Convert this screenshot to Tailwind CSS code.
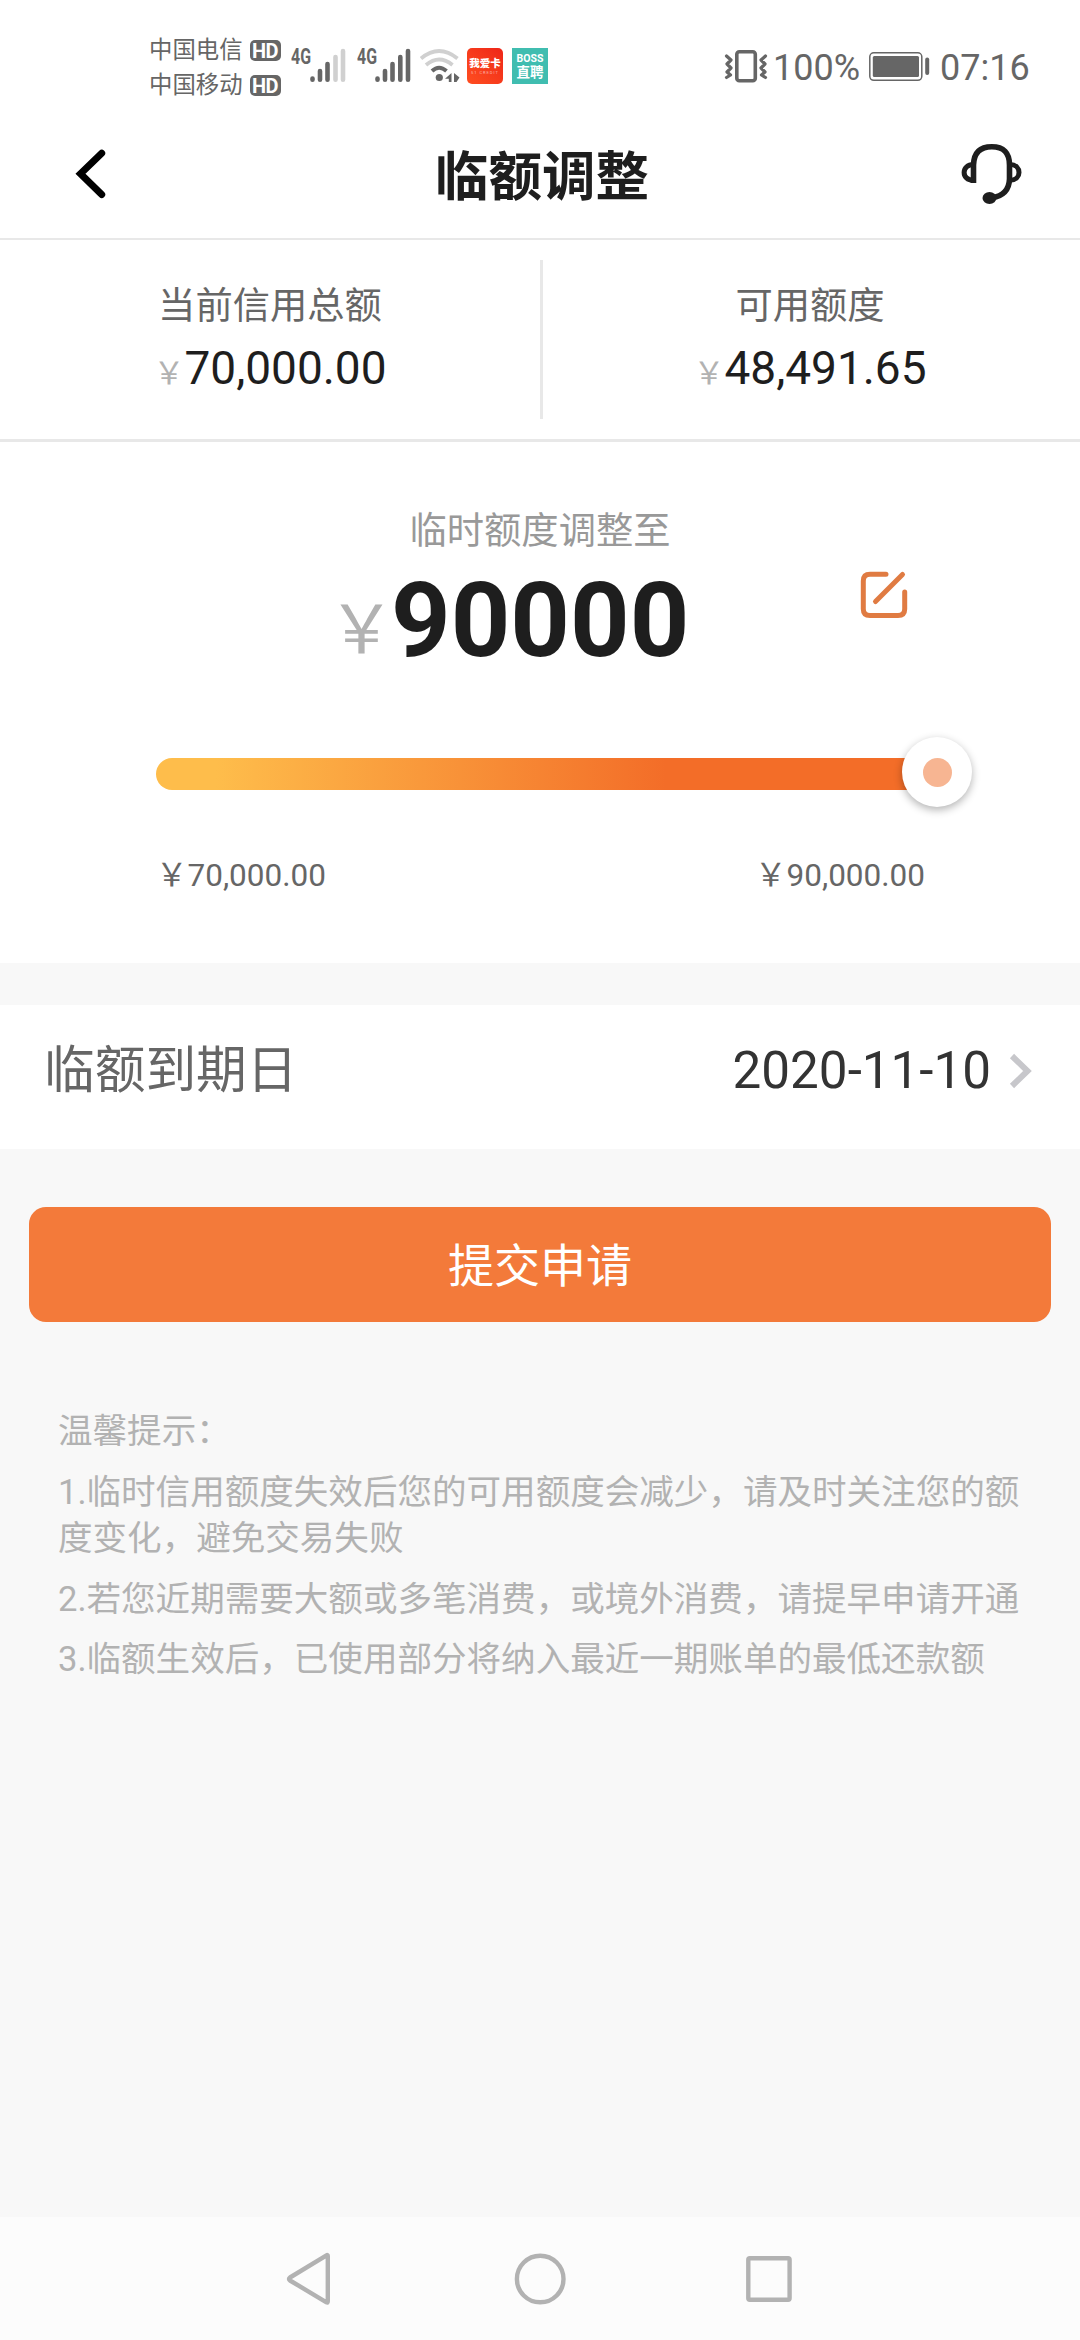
<!DOCTYPE html>
<html lang="zh-CN">
<head>
<meta charset="utf-8">
<title>临额调整</title>
<script src="https://cdn.jsdelivr.net/npm/@tailwindcss/browser@4"></script>
</head>
<body class="flex h-[2340px] w-[1080px] flex-col overflow-hidden bg-[#f8f8f8] font-['Roboto','Noto_Sans_CJK_SC',sans-serif] text-[#1e1e1e]">

<!-- Status bar -->
<div class="flex h-[105px] shrink-0 items-start bg-white text-[#666]">
  <div class="ml-[149px] mt-[33px] flex w-[134px] flex-col text-[23.4px] leading-[35px]">
    <div class="flex h-[35px] items-center gap-[7px]"><span class="whitespace-nowrap">中国电信</span><span class="flex h-[21px] w-[31px] items-center justify-center rounded-[5px] bg-[#666] text-[20px] font-bold leading-none tracking-[-0.5px] text-white">HD</span></div>
    <div class="flex h-[35px] items-center gap-[7px]"><span class="whitespace-nowrap">中国移动</span><span class="flex h-[21px] w-[31px] items-center justify-center rounded-[5px] bg-[#666] text-[20px] font-bold leading-none tracking-[-0.5px] text-white">HD</span></div>
  </div>
  <div class="ml-[8px] mt-[46px] w-[19px] origin-left scale-x-[0.74] whitespace-nowrap text-[21.5px] font-bold leading-[21px]">4G</div>
  <svg class="mt-[48px] h-[36px] w-[38px]" viewBox="310 48 38 36" fill="none" stroke="#666" stroke-width="4.6" stroke-linecap="round"><path d="M312.5 78.5v1.2M320 71v8.7M327.500 64v15.700"/><path stroke="#d0d0d0" d="M335.500 57v22.700M343 51v28.700"/></svg>
  <div class="ml-[9px] mt-[46px] w-[18px] origin-left scale-x-[0.74] whitespace-nowrap text-[21.5px] font-bold leading-[21px]">4G</div>
  <svg class="mt-[48px] h-[36px] w-[38px]" viewBox="375 48 38 36" fill="none" stroke="#666" stroke-width="4.600" stroke-linecap="round"><path d="M377.500 78.500v1.200M385 71v8.700M392.500 64v15.700M400.300 57v22.700M408 51v28.700"/></svg>
  <svg class="ml-[5px] mt-[48px] h-[36px] w-[44px]" viewBox="418 48 44 36" fill="none" stroke-linecap="butt"><path stroke="#d0d0d0" stroke-width="3.800" d="M421 58.500Q439 43.500 457.500 58.500M426 65Q439 54 452.500 65"/><path stroke="#666" stroke-width="4" d="M432 71Q439 64.500 446.500 71"/><circle cx="439.300" cy="77.500" r="3.600" fill="#666"/><path fill="#666" d="M451.500 73v9h-2.700v-3.200H445zM454 73l5.500 4.500L456.500 82H454z"/></svg>
  <div class="ml-[5px] mt-[48px] flex h-[36px] w-[36px] flex-col items-center justify-center rounded-[5px] bg-gradient-to-tr from-[#ff4d20] to-[#ee2418] text-white">
    <span class="whitespace-nowrap text-[10.500px] font-black leading-[12px]">我爱卡</span>
    <span class="h-[5px] origin-center scale-[0.5] whitespace-nowrap text-[8px] leading-[5px] tracking-[2px] text-white/60">51 CREDIT</span>
  </div>
  <div class="ml-[9px] mt-[48px] flex h-[36px] w-[36px] flex-col items-center justify-center bg-[#40bdb0] text-white">
    <span class="text-[10.500px] font-bold leading-[11px]">BOSS</span>
    <span class="whitespace-nowrap text-[13.500px] font-bold leading-[16px]">直聘</span>
  </div>
  <svg class="ml-[176px] mt-[48px] h-[36px] w-[44px]" viewBox="724 48 44 36" fill="none" stroke="#666"><rect x="736.800" y="51.800" width="18.500" height="29" rx="2.500" stroke-width="3.600"/><path stroke-width="3.200" stroke-linejoin="round" stroke-linecap="round" d="M726.500 56l4.500 4-4 4 4 4-4 4 3.500 3-4 2.500M765.500 56l-4.500 4 4 4-4 4 4 4-3.500 3 4 2.500"/></svg>
  <div class="ml-[5px] mt-[50px] w-[90px] text-[36px] leading-[36px]">100%</div>
  <svg class="ml-[5px] mt-[48px] h-[36px] w-[64px]" viewBox="868 48 64 36"><rect x="869.800" y="52.800" width="52" height="27.500" rx="4" fill="none" stroke="#666" stroke-width="1.500"/><rect x="872.800" y="56" width="46.200" height="21" rx="1.500" fill="#666"/><rect x="925.200" y="57.500" width="4" height="17.500" rx="2" fill="#666"/></svg>
  <div class="ml-[8px] mt-[50px] text-[36px] leading-[36px]">07:16</div>
</div>

<!-- Title bar -->
<div class="flex h-[135px] shrink-0 items-start justify-between border-b-2 border-[#e8e8e8] bg-white">
  <svg class="ml-[70px] mt-[40px] h-[56px] w-[40px]" viewBox="70 145 40 56" fill="none" stroke="#000" stroke-width="7" stroke-linecap="round"><path stroke-linejoin="miter" d="M101.700 153.300L80.500 173.800L101.700 194.500"/></svg>
  <h1 class="ml-[14px] mt-[43px] text-[53.500px] font-bold leading-[60px]">临额调整</h1>
  <svg class="mr-[52px] mt-[35px] h-[68px] w-[68px]" viewBox="960 140 68 68" fill="none" stroke="#1e1e1e" stroke-width="5.600"><path d="M973.500 183V165Q974 146.800 991.800 146.800T1009.500 165V179Q1009 195 992 197.800"/><path stroke-width="5" d="M973.500 180.300C961 180.300 961 164.500 973.500 164.500M1010 164.500C1022 164.500 1022 180.300 1010 180.300"/><ellipse cx="989.500" cy="198" rx="7" ry="6" fill="#1e1e1e" stroke="none"/></svg>
</div>

<!-- Credit summary -->
<div class="flex h-[202px] shrink-0 border-b-[3px] border-[#e8e8e8] bg-white">
  <div class="flex w-[540px] flex-col items-center pt-[45px]">
    <div class="text-[37.300px] leading-[42px] text-[#666]">当前信用总额</div>
    <div class="mt-[15px] flex items-baseline text-[46px] leading-[52px]"><span class="text-[31px] text-[#b2b2b2]">￥</span>70,000.00</div>
  </div>
  <div class="mt-[20px] h-[159px] w-[3px] shrink-0 bg-[#e8e8e8]"></div>
  <div class="-ml-[3px] flex w-[540px] flex-col items-center pt-[45px]">
    <div class="text-[37.300px] leading-[42px] text-[#666]">可用额度</div>
    <div class="mt-[15px] flex items-baseline text-[46px] leading-[52px]"><span class="text-[31px] text-[#b2b2b2]">￥</span>48,491.65</div>
  </div>
</div>

<!-- Temporary limit -->
<div class="h-[521px] shrink-0 bg-white pt-[68px]">
  <div class="text-center text-[37.300px] leading-[42px] text-[#999]">临时额度调整至</div>
  <div class="flex h-[130px] items-start justify-between pl-[328px] pr-[171px]">
    <div class="mt-[9px] flex items-baseline text-[104px] font-bold leading-[120px]"><span class="relative -top-[3px] text-[67px] font-normal text-[#b2b2b2]">￥</span><span class="-ml-[4px]">90000</span></div>
    <svg class="mt-[18px] h-[50px] w-[50px]" viewBox="859 570 50 50" fill="none" stroke="#e07b42" stroke-width="5" stroke-linecap="round"><path d="M886 574.300H870Q863.300 574.300 863.300 581V609Q863.300 615.500 870 615.500H898Q904.700 615.500 904.700 609V592M902.500 574.500L875.500 601.500"/></svg>
  </div>
  <div class="relative ml-[156px] mt-[76px] h-[32px] w-[781px] rounded-l-full bg-[linear-gradient(90deg,#febd4b_0px,#febd4b_60px,#f36d28_510px,#f36d28_781px)]">
    <div class="absolute -right-[35px] -top-[21px] flex h-[70px] w-[70px] items-center justify-center rounded-full bg-white shadow-[0_3px_8px_rgba(0,0,0,0.3)]"><div class="h-[29px] w-[29px] rounded-full bg-[#f7b592]"></div></div>
  </div>
  <div class="mt-[68px] flex justify-between pl-[156px] pr-[155px] text-[31.500px] leading-[36px] text-[#666]"><span>￥70,000.00</span><span>￥90,000.00</span></div>
</div>

<!-- Expiry date -->
<div class="mt-[42px] flex h-[144px] shrink-0 items-start bg-white pl-[44px] pt-[36px]">
  <div class="flex-1 text-[50.700px] leading-[60px] text-[#666]">临额到期日</div>
  <div class="text-[51.200px] leading-[60px] text-[#333]">2020-11-10</div>
  <svg class="ml-[17px] mr-[46px] mt-[9px] h-[42px] w-[26px]" viewBox="1008 1051 26 42" fill="none" stroke="#c7c7cb" stroke-width="6"><path d="M1012 1057L1027.500 1072L1012 1087"/></svg>
</div>

<button class="mx-[29px] mt-[58px] h-[115px] shrink-0 rounded-[17px] bg-[#f37a3a] pt-[3px] text-[46px] leading-[60px] text-white">提交申请</button>

<!-- Tips -->
<div class="ml-[58px] mt-[86px] flex flex-1 flex-col gap-[14px] whitespace-nowrap text-[34.560px] leading-[46.500px] text-[#b2b2b2]">
  <p>温馨提示：</p>
  <p>1.临时信用额度失效后您的可用额度会减少，请及时关注您的额<br>度变化，避免交易失败</p>
  <p>2.若您近期需要大额或多笔消费，或境外消费，请提早申请开通</p>
  <p>3.临额生效后，已使用部分将纳入最近一期账单的最低还款额</p>
</div>

<!-- System navigation -->
<div class="flex h-[123px] shrink-0 items-start bg-[#fcfcfc] pt-[34px]">
  <svg class="ml-[282px] h-[56px] w-[52px]" viewBox="282 2251 52 56" fill="none" stroke="#b2b2b2" stroke-width="4.400" stroke-linejoin="round"><path d="M327.800 2256Q327.800 2254.500 326.500 2255.300L290 2277.500Q288 2279 290 2280.500L326.500 2302.300Q327.800 2303 327.800 2301Z"/></svg>
  <svg class="ml-[178px] h-[56px] w-[56px]" viewBox="512 2251 56 56" fill="none" stroke="#b2b2b2" stroke-width="4.400"><circle cx="540.200" cy="2279" r="23.300"/></svg>
  <svg class="ml-[176px] h-[56px] w-[50px]" viewBox="744 2251 50 56" fill="none" stroke="#b2b2b2" stroke-width="4.400"><rect x="748.300" y="2258.300" width="41.300" height="41.500" rx="1.500"/></svg>
</div>
</body>
</html>
